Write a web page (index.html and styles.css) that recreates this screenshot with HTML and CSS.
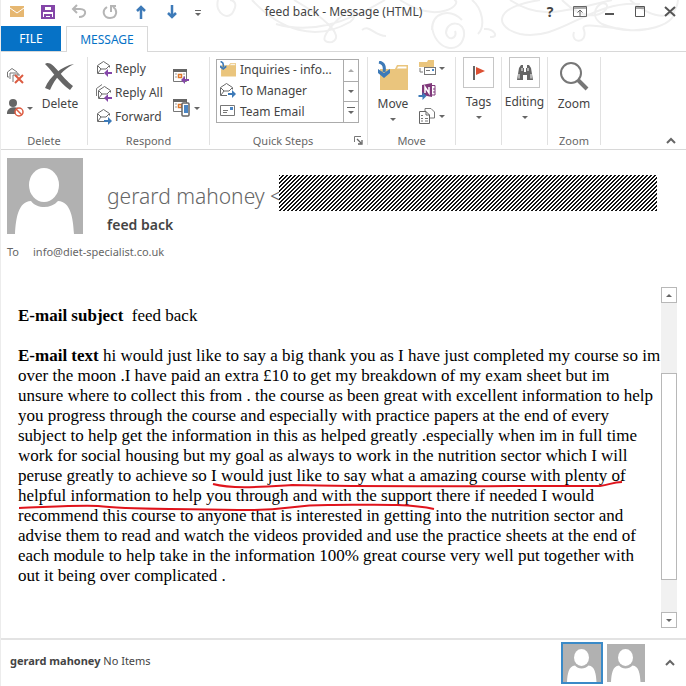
FILE: index.html
```html
<!DOCTYPE html>
<html lang="en">
<head>
  <meta charset="UTF-8" />
  <meta name="viewport" content="width=device-width, initial-scale=1.0" />
  <title>feed back - Message (HTML)</title>
  <link rel="stylesheet" href="styles.css">
</head>
<body>

  <!-- Shared icons -->
  <svg class="sprite" aria-hidden="true">
    <symbol id="person" viewBox="0 0 76 76">
      <rect width="76" height="76" fill="#b1b1b1" />
      <ellipse cx="37" cy="27" rx="15" ry="17" fill="#fff" />
      <path d="M8 76C9 60 11 44 24 43C30 51 44 51 51 43C64 44 66 60 67 76Z" fill="#fff" />
    </symbol>
    <symbol id="envelope" viewBox="0 0 18 16">
      <path d="M1.500 13.500V5.500L7.500 1.500L13.500 5.500V7.500M1.500 13.500H8M2 6L5 9H10L13 6M2 13L5 9" fill="none" stroke="#6a6a6a" />
    </symbol>
    <symbol id="arrow-left" viewBox="0 0 8 8">
      <path d="M0 4L4 0V3H8V5H4V8Z" fill="#8446a8" />
    </symbol>
    <symbol id="arrow-right" viewBox="0 0 8 8">
      <path d="M8 4L4 0V3H0V5H4V8Z" fill="#3d7ab8" />
    </symbol>
    <symbol id="folder" viewBox="0 0 32 30">
      <path d="M3 8H18L20 4H31V29H3Z" fill="#eac57d" />
      <path d="M19 8L21 5H30V8Z" fill="#fff" stroke="#eac57d" />
      <path d="M2 1C7 2 8 6 7 11" fill="none" stroke="#3d7ab8" stroke-width="3" />
      <path d="M1 8L7 12L13 8V12L7 17L1 12Z" fill="#3d7ab8" />
    </symbol>
    <symbol id="calendar" viewBox="0 0 16 14">
      <path d="M.5 .5H13.500V12.500H.5Z" fill="#fff" stroke="#777" />
      <path d="M0 0H14V3H0Z" fill="#666" />
      <path d="M2 5H4M2 8H4M10 5H12M10 8H12" stroke="#999" />
      <rect x="5.500" y="5.500" width="3" height="3" fill="#fff" stroke="#e07a2c" stroke-width="1.500" />
    </symbol>
  </svg>

  <header class="titlebar">
    <svg class="swirls" viewBox="0 0 476 52" aria-hidden="true">
      <path d="M8 0C4 14 20 22 24 10C28 2 22 0 20 0M42 0C70 30 105 42 140 22C150 14 142 8 134 14C120 26 105 44 122 42C136 36 112 16 84 0M66 24C100 34 135 24 175 0M152 30C160 24 164 36 176 36M190 0C230 26 254 2 244 0M222 26C224 50 250 56 254 36C256 20 236 20 236 33C238 42 248 38 245 31M222 30C222 12 240 8 252 20M262 0C272 8 276 26 268 34M274 29C284 28 290 38 280 37M330 0C280 8 286 28 310 34C350 42 380 0 430 4M300 0C330 20 350 12 402 0M352 0C380 28 402 10 396 4C388 0 378 16 392 24C430 40 474 22 462 8M364 32C360 44 378 44 374 30C370 22 388 26 420 30M420 0C446 22 466 20 468 0" />
    </svg>
    <nav class="quick-access" aria-label="Quick access">
      <button aria-label="Mail"><svg width="16" height="16" viewBox="0 0 16 16"><path d="M1 2H15V13H1Z" fill="#e6b771" /><path d="M1 4L8 9L15 4" fill="none" stroke="#fff" /></svg></button>
      <button aria-label="Save"><svg width="16" height="16" viewBox="0 0 16 16"><path d="M2 2H14V14H2ZM4 2V7H12V2M5 14V11H11V14" fill="none" stroke="#8446a8" stroke-width="2" /></svg></button>
      <button aria-label="Undo"><svg width="16" height="16" viewBox="0 0 16 16"><path d="M2 5H9C17 5 15 13 8 13M6 1L2 5L6 9" fill="none" stroke="#b5b5b5" stroke-width="2" /></svg></button>
      <button aria-label="Redo"><svg width="16" height="16" viewBox="0 0 16 16"><path d="M5 3C-1 7 2 14 8 14C15 14 16 6 11 3M9 8V2H14" fill="none" stroke="#b5b5b5" stroke-width="2" /></svg></button>
      <button aria-label="Previous item"><svg width="16" height="16" viewBox="0 0 16 16"><path d="M8 15V3M4 7L8 3L12 7" fill="none" stroke="#3d7ab8" stroke-width="2.500" /></svg></button>
      <button aria-label="Next item"><svg width="16" height="16" viewBox="0 0 16 16"><path d="M8 1V13M4 9L8 13L12 9" fill="none" stroke="#3d7ab8" stroke-width="2.500" /></svg></button>
      <button aria-label="Customize"><svg width="16" height="16" viewBox="0 0 16 16"><path d="M0 6.500H6" stroke="#666" /><path d="M0 9H6L3 12Z" fill="#666" /></svg></button>
    </nav>
    <h1>feed back - Message (HTML)</h1>
    <div class="window-controls">
      <button class="help" aria-label="Help">?</button>
      <button aria-label="Ribbon options"><svg width="16" height="16" viewBox="0 0 16 16"><path d="M1.500 2.500H14.500V12.500H1.500ZM1 4H15M8 12V6M5.500 8.500L8 6L10.500 8.500" fill="none" stroke="#666" /></svg></button>
      <button aria-label="Minimize"><svg width="16" height="16" viewBox="0 0 16 16"><path d="M3 10H12" stroke="#555" stroke-width="2" /></svg></button>
      <button aria-label="Maximize"><svg width="16" height="16" viewBox="0 0 16 16"><path d="M3.500 2.500H12.500V12.500H3.500ZM3 4H13" fill="none" stroke="#555" /></svg></button>
      <button aria-label="Close"><svg width="16" height="16" viewBox="0 0 16 16"><path d="M3 3L13 12M13 3L3 12" stroke="#555" stroke-width="2" /></svg></button>
    </div>
  </header>

  <nav class="tabs">
    <button class="tab-file">FILE</button>
    <button class="tab-message">MESSAGE</button>
  </nav>

  <section class="ribbon" aria-label="Ribbon">
    <div class="group group-delete">
      <div class="group-body">
        <div class="small-icons">
          <button aria-label="Ignore"><svg width="18" height="18" viewBox="0 0 18 18"><path d="M1.500 10V5L6 1.500L11 5M1.500 10H3M4 12V6H12V8M7 15V8H14" fill="none" stroke="#777" /><path d="M9 8L17 16M17 8L9 16" stroke="#dc5b41" stroke-width="2" /></svg></button>
          <button aria-label="Junk"><svg width="18" height="18" viewBox="0 0 18 18"><circle cx="7" cy="4" r="4" fill="#666" /><path d="M1 15C0 7 12 7 13 10L9 15Z" fill="#666" /><circle cx="13" cy="13" r="4" fill="#fff" stroke="#dc5b41" stroke-width="1.500" /><path d="M10 10L16 16" stroke="#dc5b41" stroke-width="1.500" /></svg><i class="caret"></i></button>
        </div>
        <button class="big"><svg width="32" height="32" viewBox="0 0 32 32"><path d="M1 4C8 -1 16 16 29 26L26 30C15 22 9 12 1 4Z" fill="#666" /><path d="M30 4C20 9 11 18 6 30L1 28C6 16 18 6 30 4Z" fill="#666" /></svg>Delete</button>
      </div>
      <h2>Delete</h2>
    </div>

    <div class="group group-respond">
      <div class="group-body">
        <div class="rows">
          <button><svg width="18" height="18" viewBox="0 0 18 18"><use href="#envelope" width="18" height="16" /><use href="#arrow-left" x="8" y="9" width="8" height="8" /></svg>Reply</button>
          <button><svg width="18" height="18" viewBox="0 0 18 18"><path d="M.5 12V4.500L6 .5" fill="none" stroke="#777" /><use href="#envelope" x="1" y="1" width="18" height="16" /><use href="#arrow-left" x="8" y="10" width="8" height="8" /></svg>Reply All</button>
          <button><svg width="18" height="18" viewBox="0 0 18 18"><use href="#envelope" width="18" height="16" /><use href="#arrow-right" x="8" y="9" width="8" height="8" /></svg>Forward</button>
        </div>
        <div class="small-icons">
          <button aria-label="Meeting"><svg width="18" height="18" viewBox="0 0 18 18"><use href="#calendar" y="2" width="16" height="14" /><use href="#arrow-left" x="8" y="9" width="8" height="8" /></svg></button>
          <button aria-label="More"><svg width="18" height="18" viewBox="0 0 18 18"><use href="#calendar" width="16" height="14" /><rect x="9" y="4" width="7" height="13" rx="1" fill="#fff" stroke="#666" stroke-width="1.500" /><rect x="11" y="6" width="4" height="8" fill="#4a86c5" /></svg><i class="caret"></i></button>
        </div>
      </div>
      <h2>Respond</h2>
    </div>

    <div class="group group-steps">
      <div class="group-body">
        <div class="steps">
          <div class="steps-list">
            <button><svg width="18" height="18" viewBox="0 0 18 18"><use href="#folder" width="18" height="16" /></svg>Inquiries - info...</button>
            <button><svg width="18" height="18" viewBox="0 0 18 18"><use href="#envelope" width="18" height="16" /><use href="#arrow-right" x="9" y="8" width="8" height="8" /></svg>To Manager</button>
            <button><svg width="18" height="18" viewBox="0 0 18 18"><path d="M1.500 2.500H15.500V12.500H1.500ZM4 7.500H9M4 9.500H8" fill="none" stroke="#777" /><path d="M11 4H14V7H11Z" fill="#4a86c5" /></svg>Team Email</button>
          </div>
          <div class="steps-scroll">
            <button aria-label="Scroll up"><i class="caret up pale"></i></button>
            <button aria-label="Scroll down"><i class="caret"></i></button>
            <button aria-label="More steps"><i class="caret lined"></i></button>
          </div>
        </div>
      </div>
      <div class="group-foot">
        <h2>Quick Steps</h2>
        <button class="launcher" aria-label="Manage quick steps"><svg width="9" height="9" viewBox="0 0 9 9"><path d="M.5 6V.5H7" fill="none" stroke="#777" /><path d="M3 3L7 7M8 4V8H4" fill="none" stroke="#666" stroke-width="1.300" /></svg></button>
      </div>
    </div>

    <div class="group group-move">
      <div class="group-body">
        <button class="big"><svg width="32" height="32" viewBox="0 0 32 30"><use href="#folder" width="32" height="30" /></svg>Move<i class="caret"></i></button>
        <div class="move-icons">
          <button aria-label="Rules"><svg width="18" height="18" viewBox="0 0 18 18"><path d="M1 3H9L10 1H16V8H1Z" fill="#eac57d" /><rect x="6.500" y="8.500" width="11" height="7" fill="#fff" stroke="#777" /><path d="M2 9V13H5M8 11.500H12" fill="none" stroke="#777" /><path d="M14 10H16V12H14Z" fill="#4a86c5" /></svg><i class="caret"></i></button>
          <button aria-label="OneNote"><svg width="18" height="18" viewBox="0 0 18 18"><path d="M4 2L14 0V14L4 12Z" fill="#80397b" /><path d="M14 2.500H17V12H14M15 6H17M15 9H17" fill="none" stroke="#80397b" /><path d="M7 10V4L11 10V4" fill="none" stroke="#fff" stroke-width="1.500" /><use href="#arrow-right" x="0" y="9" width="9" height="8" /></svg></button>
          <button aria-label="Actions"><svg width="18" height="18" viewBox="0 0 18 18"><path d="M7 4.500V1.500H13L16.500 5V11H12" fill="#fff" stroke="#777" /><path d="M1.500 4.500H8L11.500 8V16.500H1.500ZM8 4.500V8H11.500" fill="#fff" stroke="#666" /><path d="M3 8.500H5M3 11.500H5M3 14H5M7 11.500H10M7 14H10" stroke="#777" /></svg><i class="caret"></i></button>
        </div>
      </div>
      <h2>Move</h2>
    </div>

    <div class="group group-narrow">
      <button class="boxed"><span class="box"><svg width="18" height="18" viewBox="0 0 18 18"><path d="M4 2V16" stroke="#666" stroke-width="2" /><path d="M6 3L15 7L6 11Z" fill="#dc5033" /></svg></span>Tags<i class="caret"></i></button>
    </div>

    <div class="group group-narrow">
      <button class="boxed"><span class="box"><svg width="18" height="18" viewBox="0 0 18 18"><path d="M3 4L5 1H7V4H8V8H10V4H11V1H13L15 4L17 16H11V11H7V16H1Z" fill="#666" /><path d="M3 14.500V10M15 14.500V10M6 7V4M12 7V4" stroke="#fff" /></svg></span>Editing<i class="caret"></i></button>
    </div>

    <div class="group group-zoom">
      <div class="group-body">
        <button class="big"><svg width="32" height="32" viewBox="0 0 32 32"><circle cx="13" cy="13" r="10" fill="#fff" stroke="#777" stroke-width="2" /><path d="M20 20L29 29" stroke="#777" stroke-width="4" /></svg>Zoom</button>
      </div>
      <h2>Zoom</h2>
    </div>

    <button class="collapse" aria-label="Collapse ribbon"><svg width="10" height="8" viewBox="0 0 10 8"><path d="M1 6L5 2L9 6" fill="none" stroke="#666" stroke-width="2" /></svg></button>
  </section>

  <section class="message-head">
    <div class="sender">
      <svg class="avatar" role="img" aria-label="gerard mahoney"><use href="#person" /></svg>
      <div class="sender-text">
        <div class="from">
          <span>gerard mahoney &lt;</span>
          <svg class="redacted" aria-hidden="true">
            <defs>
              <pattern id="hatch" width="4" height="4" patternUnits="userSpaceOnUse">
                <path d="M3 0h2v1h-2zM2 1h2v1h-2zM1 2h2v1h-2zM0 3h2v1h-2zM0 0h1v1h-1z" fill="#111" shape-rendering="crispEdges" />
              </pattern>
            </defs>
            <rect width="100%" height="100%" fill="#fff" />
            <rect width="100%" height="100%" fill="url(#hatch)" />
          </svg>
        </div>
        <h2>feed back</h2>
      </div>
    </div>
    <p class="to"><span>To</span><a href="mailto:info@diet-specialist.co.uk">info@diet-specialist.co.uk</a></p>
  </section>

  <main class="message">
    <article class="mail-text">
      <p><b>E-mail subject</b>&nbsp; feed back</p>
      <p><b>E-mail text</b> hi would just like to say a big thank you as I have just completed my course so im<br>
        over the moon .I have paid an extra £10 to get my breakdown of my exam sheet but im<br>
        unsure where to collect this from . the course as been great with excellent information to help<br>
        you progress through the course and especially with practice papers at the end of every<br>
        subject to help get the information in this as helped greatly .especially when im in full time<br>
        work for social housing but my goal as always to work in the nutrition sector which I will<br>
        peruse greatly to achieve so I would just like to say what a amazing course with plenty of<br>
        helpful information to help you through and with the support there if needed I would<br>
        recommend this course to anyone that is interested in getting into the nutrition sector and<br>
        advise them to read and watch the videos provided and use the practice sheets at the end of<br>
        each module to help take in the information 100% great course very well put together with<br>
        out it being over complicated .</p>
      <!-- Hand-drawn underline -->
      <svg class="marker" width="610" height="32" viewBox="0 0 610 32" aria-hidden="true">
        <path d="M195 4C214 9 240 7 274 5C350 7 430 6 582 6C592 5 594 2 604 2M1 28C30 27 60 25 80 26C110 30 150 28 220 30C270 31 270 25 310 25C350 25 390 23 416 29" />
      </svg>
    </article>
    <div class="scrollbar">
      <button aria-label="Scroll up"><i class="caret up"></i></button>
      <div class="track"><div class="thumb"></div></div>
      <button aria-label="Scroll down"><i class="caret"></i></button>
    </div>
  </main>

  <footer class="people">
    <p><b>gerard mahoney</b> No Items</p>
    <button class="person selected" aria-label="Person 1"><svg width="38" height="38"><use href="#person" /></svg></button>
    <button class="person" aria-label="Person 2"><svg width="38" height="38"><use href="#person" /></svg></button>
    <button class="expand" aria-label="Expand people pane"><svg width="10" height="8" viewBox="0 0 10 8"><path d="M1 6L5 2L9 6" fill="none" stroke="#666" stroke-width="2" /></svg></button>
  </footer>

</body>
</html>
```

FILE: styles.css
```css
* {
  box-sizing: border-box;
}

body {
  margin: 0;
  min-height: 100vh;
  display: flex;
  flex-direction: column;
  background: #fff;
  color: #444;
  font-family: "Noto Sans", "Open Sans", sans-serif;
  font-size: 12px;
  line-height: 16px;
  border-left: 1px solid #ececec;
}

h1, h2, p {
  margin: 0;
  font-size: 12px;
  font-weight: normal;
}

button {
  display: flex;
  align-items: center;
  padding: 0;
  border: 0;
  background: none;
  color: inherit;
  font: inherit;
  white-space: nowrap;
}

svg {
  display: block;
  flex: none;
}

.sprite {
  position: absolute;
  width: 0;
  height: 0;
}

.caret {
  flex: none;
  width: 0;
  height: 0;
  border: 3px solid transparent;
  border-top-color: #666;
  border-bottom: 0;
}

.caret.up {
  border-top: 0;
  border-bottom: 3px solid #666;
}

.caret.pale {
  border-bottom-color: #aaa;
}

.caret.lined {
  position: relative;
}

.caret.lined::before {
  content: "";
  position: absolute;
  left: -4px;
  top: -7px;
  width: 8px;
  height: 1px;
  background: #666;
}

/* Title bar */
.titlebar {
  position: relative;
  display: grid;
  grid-template-columns: 1fr auto 1fr;
  align-items: center;
  height: 26px;
  padding-bottom: 2px;
}

.titlebar h1 {
  position: relative;
}

.swirls {
  position: absolute;
  right: 0;
  top: 0;
  width: 476px;
  height: 52px;
  fill: none;
  stroke: #efefef;
  stroke-width: 2;
}

.quick-access {
  display: flex;
  gap: 15px;
  padding-left: 8px;
}

.window-controls {
  position: relative;
  display: flex;
  justify-content: flex-end;
  gap: 14px;
  padding-right: 8px;
}

.help {
  width: 16px;
  justify-content: center;
  font-size: 14px;
  font-weight: bold;
}

/* Tabs */
.tabs {
  display: flex;
  gap: 5px;
  height: 26px;
  border-bottom: 1px solid #d8d8d8;
}

.tabs button {
  position: relative;
  justify-content: center;
}

.tab-file {
  width: 60px;
  background: #0672c6;
  color: #fff;
}

.tab-message {
  width: 82px;
  height: 26px;
  border: 1px solid #d8d8d8;
  border-bottom: 0;
  background: #fff;
  color: #0672c6;
}

/* Ribbon */
.ribbon {
  display: flex;
  height: 98px;
  padding: 5px 0 4px;
  border-bottom: 1px solid #d8d8d8;
}

.group {
  display: flex;
  flex-direction: column;
  border-right: 1px solid #e1e1e1;
}

.group h2 {
  font-size: 11px;
  line-height: 8px;
  color: #666;
  text-align: center;
}

.group-body {
  display: flex;
  height: 80px;
}

.group-foot {
  display: flex;
  align-items: center;
  gap: 20px;
  padding: 0 4px 0 22px;
}

.group-foot h2 {
  flex: 1;
}

.group-delete {
  width: 87px;
}

.group-respond {
  width: 122px;
}

.group-steps {
  width: 158px;
}

.group-move {
  width: 88px;
}

.group-narrow {
  width: 46px;
  align-items: center;
}

.group-zoom {
  width: 53px;
}

.small-icons {
  display: flex;
  flex-direction: column;
  gap: 14px;
  padding: 10px 0 0 5px;
}

.small-icons button,
.move-icons button {
  gap: 3px;
}

.big {
  flex: 1;
  flex-direction: column;
  padding-top: 3px;
}

.big svg {
  margin-bottom: 4px;
}

.big .caret,
.boxed .caret {
  margin-top: 6px;
}

.rows {
  display: flex;
  flex-direction: column;
  gap: 6px;
  padding: 3px 0 0 8px;
  width: 80px;
}

.rows button {
  gap: 1px;
}

.steps {
  display: flex;
  flex: 1;
  height: 64px;
  margin: 2px 8px 0 6px;
  border: 1px solid #ababab;
}

.steps-list {
  flex: 1;
  display: flex;
  flex-direction: column;
  justify-content: space-around;
  padding-left: 2px;
}

.steps-list button {
  gap: 3px;
}

.steps-scroll {
  display: grid;
  grid-template-rows: repeat(3, 1fr);
  width: 15px;
  border-left: 1px solid #ababab;
}

.steps-scroll button {
  justify-content: center;
}

.steps-scroll button + button {
  border-top: 1px solid #ababab;
}

.move-icons {
  display: flex;
  flex-direction: column;
  gap: 6px;
  width: 37px;
  padding-top: 2px;
}

.boxed {
  flex-direction: column;
}

.box {
  display: flex;
  align-items: center;
  justify-content: center;
  width: 31px;
  height: 31px;
  margin-bottom: 6px;
  border: 1px solid #c6c6c6;
}

.collapse {
  align-self: flex-end;
  margin: 0 10px 0 auto;
}

/* Sender */
.message-head {
  padding: 8px 6px 0;
  color: #666;
}

.sender {
  display: flex;
  gap: 24px;
}

.avatar {
  width: 76px;
  height: 76px;
}

.sender-text {
  flex: 1;
  padding-top: 17px;
}

.sender-text h2 {
  padding-top: 6px;
  color: #444;
  font-size: 14px;
  font-weight: 600;
}

.from {
  display: flex;
  align-items: flex-end;
  height: 36px;
  font-size: 21px;
  font-weight: 300;
  line-height: 30px;
  white-space: nowrap;
}

.from span {
  width: 172px;
}

/* covers the end of the address */
.redacted {
  position: relative;
  flex: 1;
  height: 36px;
  margin-right: 23px;
}

.to {
  display: flex;
  gap: 14px;
  padding-top: 10px;
  font-size: 11px;
}

.to a {
  color: inherit;
  text-decoration: none;
}

/* Message body */
.message {
  flex: 1;
  display: flex;
  justify-content: space-between;
  padding: 27px 9px 10px 17px;
}

.mail-text {
  position: relative;
  padding-top: 19px;
  color: #000;
  font-family: "Liberation Serif", serif;
  white-space: nowrap;
}

.mail-text p {
  margin-bottom: 20px;
  font-size: 17px;
  line-height: 20px;
}

.marker {
  position: absolute;
  left: 0;
  top: 193px;
  fill: none;
  stroke: #e0141c;
  stroke-width: 2;
}

.scrollbar {
  display: flex;
  flex-direction: column;
  width: 16px;
  background: #f1f1f1;
}

.scrollbar button {
  justify-content: center;
  height: 16px;
  border: 1px solid #b8b8b8;
  background: #fff;
}

.track {
  flex: 1;
  display: grid;
  grid-template-rows: 70fr 208fr 32fr;
}

.thumb {
  grid-row: 2;
  border: 1px solid #b8b8b8;
  background: #fff;
}

/* People pane */
.people {
  display: flex;
  align-items: center;
  height: 48px;
  padding: 0 11px 0 9px;
  border-top: 2px solid #e3e3e3;
}

.people p {
  flex: 1;
  padding-bottom: 4px;
  font-size: 11px;
}

.person {
  padding: 2px;
}

.person.selected {
  border: 2px solid #3a8ac8;
  padding: 0;
  margin-right: 2px;
}

.expand {
  margin-left: 18px;
}
```
